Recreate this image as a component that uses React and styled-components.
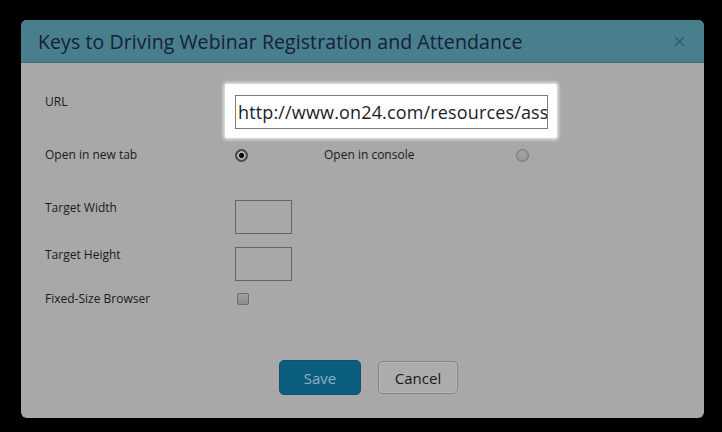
import React from "react";
import styled, { createGlobalStyle } from "styled-components";

const Global = createGlobalStyle`
  html, body { margin: 0; padding: 0; background: #000; }
  body { width: 722px; height: 432px; overflow: hidden; font-family: "Open Sans", "Noto Sans", sans-serif; }
`;

const Stage = styled.div`
  width: 722px;
  height: 432px;
  background: #000;
  padding: 20px 18px 14px 21px;
  box-sizing: border-box;
  display: flex;
`;

const Dialog = styled.div`
  flex: 1;
  display: flex;
  flex-direction: column;
  background: #a8a8a8;
  border-radius: 6px;
  overflow: hidden;
`;

const Header = styled.div`
  height: 42px;
  background: #497f8c;
  border-bottom: 1px solid #3d6a76;
  display: flex;
  align-items: center;
  justify-content: space-between;
  padding: 0 19px 0 17px;
`;

const Title = styled.h1`
  margin: 0;
  font-family: "Open Sans", sans-serif;
  font-weight: 400;
  font-size: 19.5px;
  letter-spacing: 0.09px;
  color: #14203a;
`;

const Close = styled.button`
  border: 0;
  background: none;
  padding: 0;
  width: 12px;
  height: 12px;
  display: flex;
  align-items: center;
  justify-content: center;
`;

const Body = styled.div`
  flex: 1;
  display: flex;
  flex-direction: column;
  padding: 21px 0 0 24px;
`;

const Row = styled.div`
  display: flex;
  align-items: ${(p) => p.$align || "center"};
  margin-top: ${(p) => p.$mt || 0}px;
  height: ${(p) => (p.$h ? p.$h + "px" : "auto")};
`;

const Label = styled.div`
  box-sizing: border-box;
  width: ${(p) => p.$w || 190}px;
  font-size: 12px;
  line-height: 16px;
  color: #1a1a24;
  padding-top: ${(p) => p.$pt || 0}px;
  padding-left: ${(p) => p.$pl || 0}px;
`;

const Spotlight = styled.div`
  margin-left: -10px;
  width: 332px;
  height: 54px;
  box-sizing: border-box;
  background: #fff;
  border-radius: 2px;
  box-shadow: 0 0 3px 2px rgba(255, 255, 255, 0.6);
  padding: 11px 9px 9px 10px;
`;

const UrlInput = styled.input`
  display: block;
  width: 100%;
  height: 34px;
  box-sizing: border-box;
  border: 1px solid #7a7a7a;
  padding: 0 0 0 2px;
  margin: 0;
  font-family: "Open Sans", sans-serif;
  font-size: 18px;
  letter-spacing: 0.15px;
  color: #1c1c2a;
  background: #fff;
  outline: none;
`;

const Radio = styled.span`
  display: inline-block;
  flex: none;
  width: 13px;
  height: 13px;
  box-sizing: border-box;
  border-radius: 50%;
  border: 1px solid ${(p) => (p.$on ? "#3c3c3c" : "#747474")};
  background: ${(p) =>
    p.$on
      ? "radial-gradient(circle, #000 0 2.2px, #b4b4b4 2.8px 4px, #555 4.5px)"
      : "radial-gradient(circle at 50% 40%, #a6a6a6, #8e8e8e)"};
`;

const SizeBox = styled.div`
  width: 57px;
  height: 34px;
  box-sizing: border-box;
  border: 1px solid #666;
`;

const Check = styled.span`
  display: inline-block;
  width: 12px;
  height: 12px;
  box-sizing: border-box;
  border-radius: 2px;
  border: 1px solid #6c6c6c;
  background: linear-gradient(#9f9f9f, #8c8c8c);
  margin-left: 2px;
`;

const Footer = styled.div`
  display: flex;
  justify-content: center;
  gap: 17px;
  margin-top: 52px;
  margin-left: -24px;
  padding-left: 12px;
`;

const Button = styled.button`
  height: ${(p) => (p.$primary ? 35 : 33)}px;
  width: ${(p) => (p.$primary ? 82 : 80)}px;
  margin-top: ${(p) => (p.$primary ? 0 : 1)}px;
  border-radius: 5px;
  font-family: "Open Sans", sans-serif;
  font-size: 15px;
  padding: 0;
  border: 1px solid ${(p) => (p.$primary ? "#0a5270" : "#848484")};
  background: ${(p) => (p.$primary ? "#0c5e7f" : "#acacac")};
  color: ${(p) => (p.$primary ? "#8db2bf" : "#121826")};
  box-shadow: ${(p) => (p.$primary ? "none" : "inset 0 0 0 1px #b8b8b8")};
`;

export default function App() {
  return (
    <>
      <Global />
      <Stage>
        <Dialog>
          <Header>
            <Title>Keys to Driving Webinar Registration and Attendance</Title>
            <Close aria-label="close">
              <svg width="11" height="11" viewBox="0 0 11 11">
                <path d="M1 1 L10 10 M10 1 L1 10" stroke="#2f5f6c" strokeWidth="1.6" />
              </svg>
            </Close>
          </Header>
          <Body>
            <Row $align="flex-start" $h={54}>
              <Label $pt={10}>URL</Label>
              <Spotlight>
                <UrlInput readOnly value="http://www.on24.com/resources/asset/keys-to-driving-webinar-registration" />
              </Spotlight>
            </Row>
            <Row $mt={8} $h={18}>
              <Label>Open in new tab</Label>
              <Radio $on />
              <Label $w={268} $pl={76}>Open in console</Label>
              <Radio />
            </Row>
            <Row $align="flex-start" $mt={36}>
              <Label>Target Width</Label>
              <SizeBox />
            </Row>
            <Row $align="flex-start" $mt={13}>
              <Label>Target Height</Label>
              <SizeBox />
            </Row>
            <Row $mt={9} $h={18}>
              <Label>Fixed-Size Browser</Label>
              <Check />
            </Row>
            <Footer>
              <Button $primary>Save</Button>
              <Button>Cancel</Button>
            </Footer>
          </Body>
        </Dialog>
      </Stage>
    </>
  );
}
